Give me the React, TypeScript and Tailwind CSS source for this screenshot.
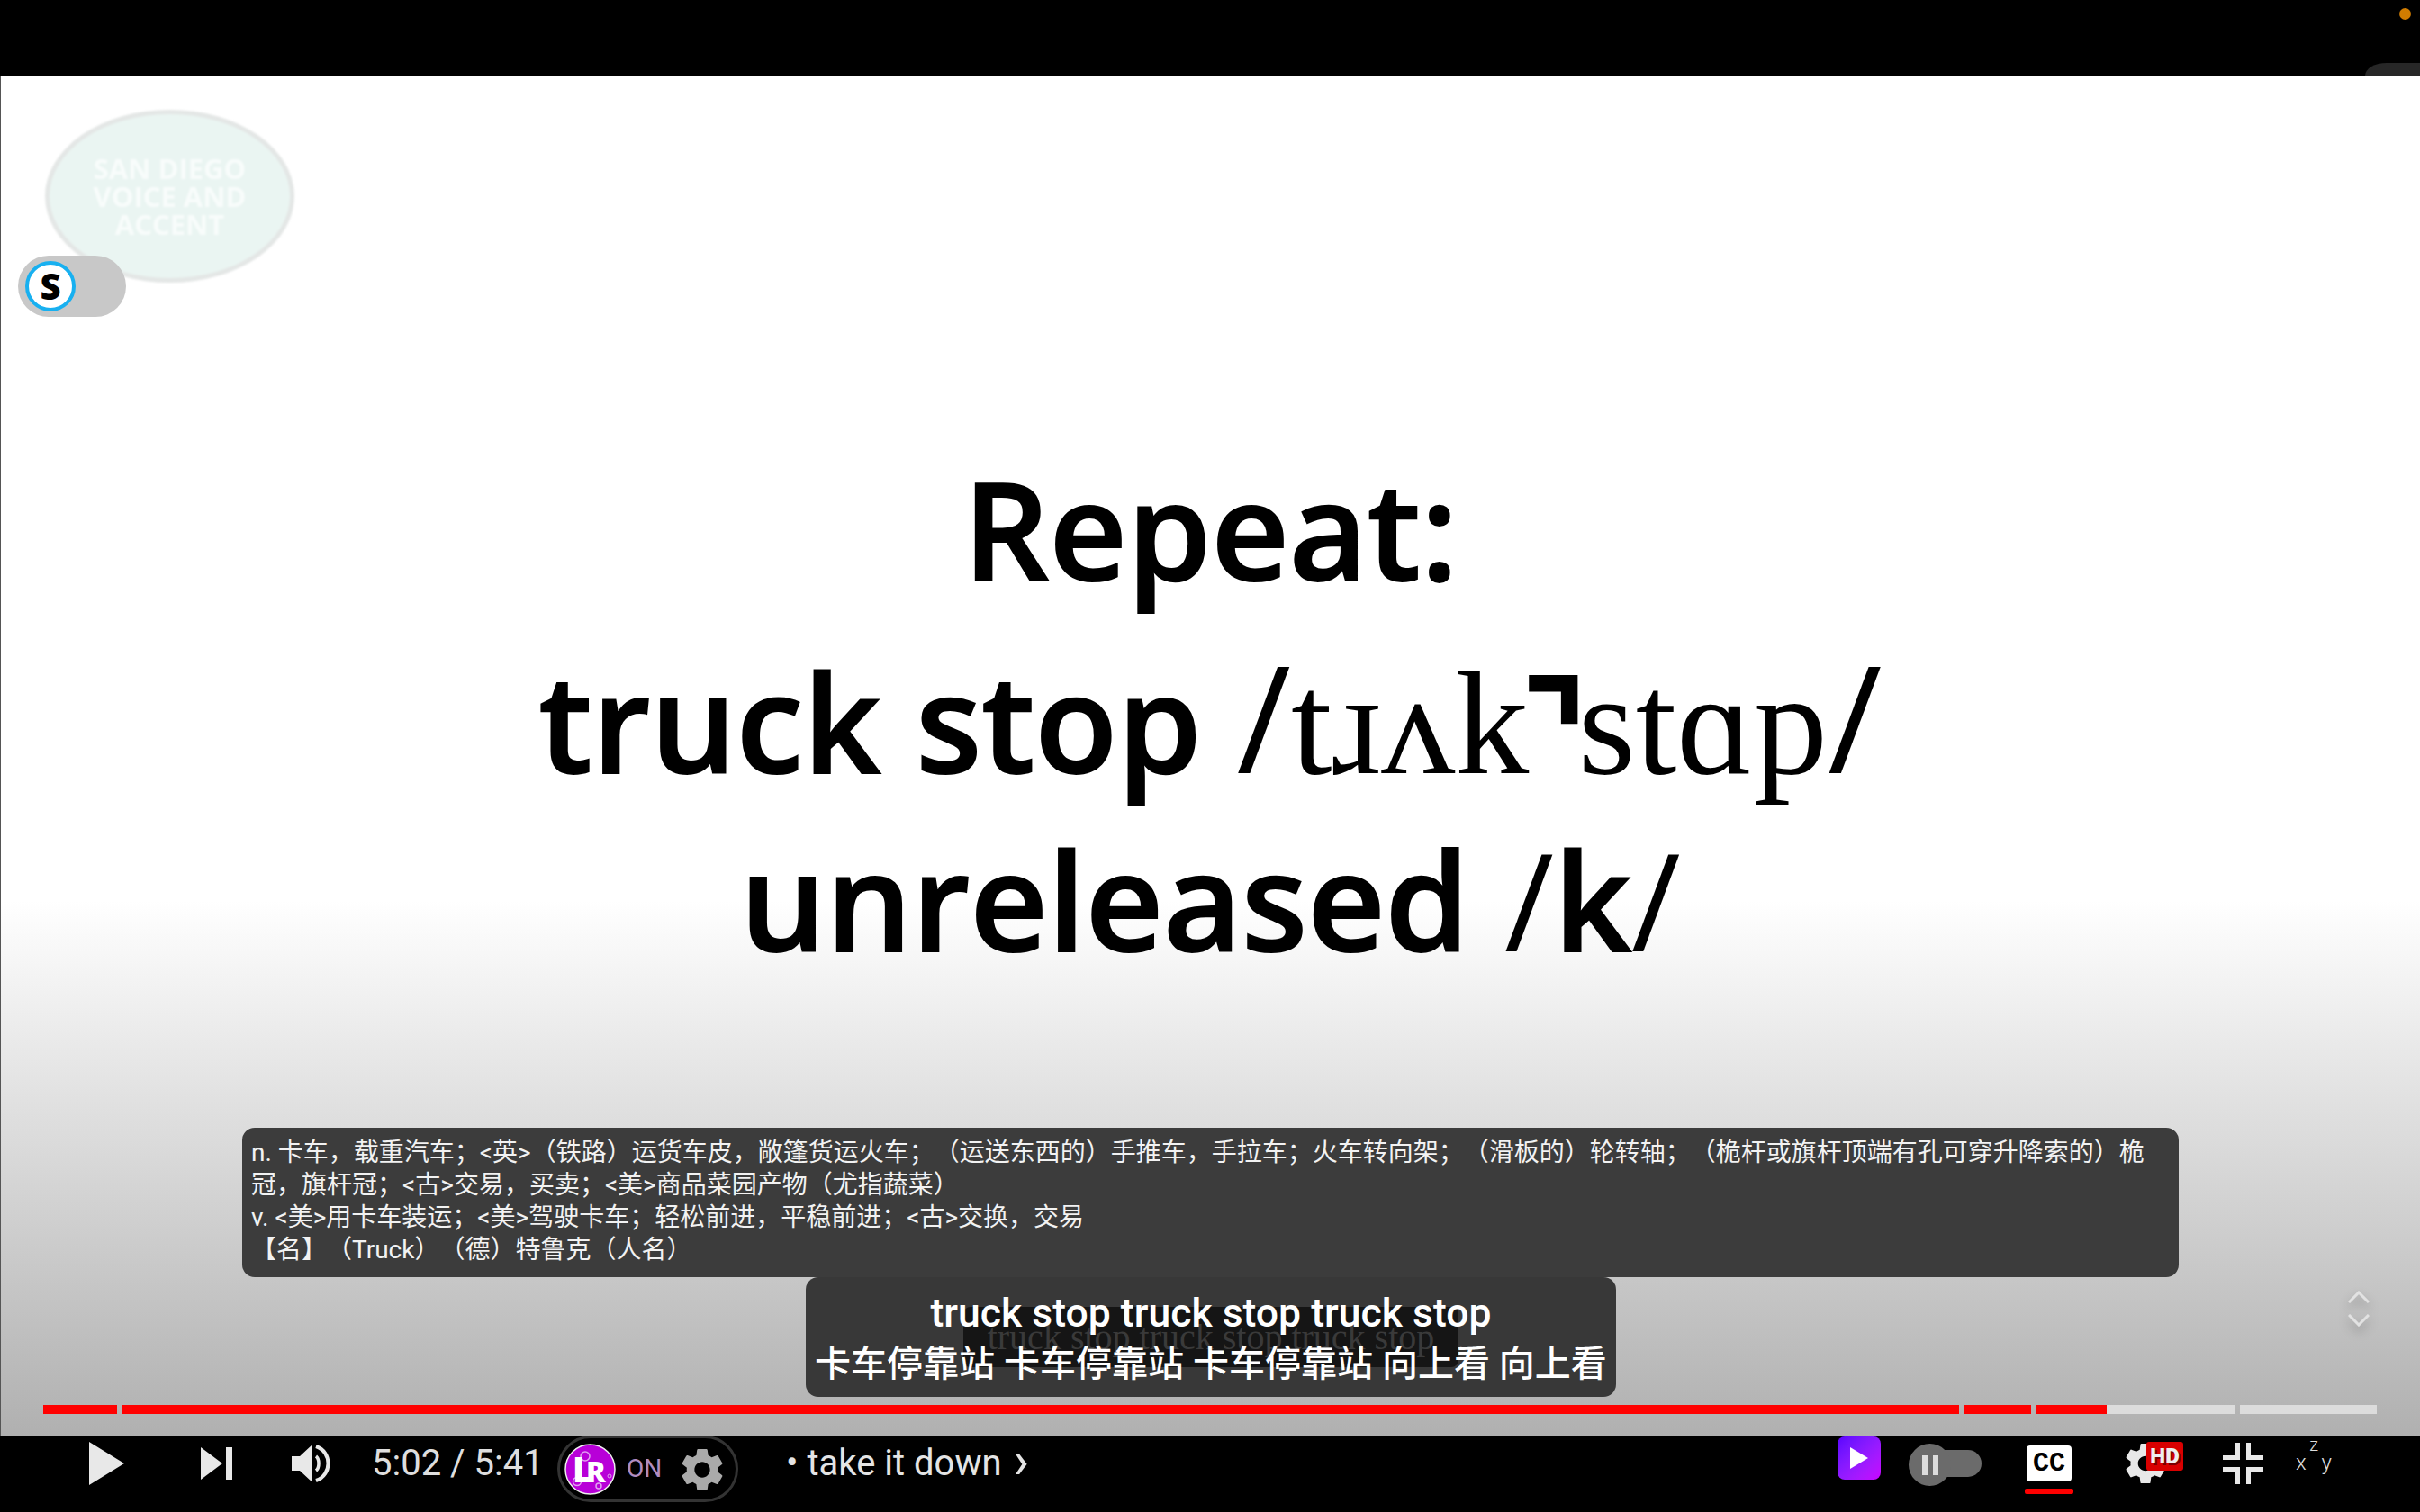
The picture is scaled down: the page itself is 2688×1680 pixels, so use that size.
const sans = "font-['Roboto','Noto_Sans_CJK_SC',sans-serif]";

const dictionary = [
  "n. 卡车，载重汽车；<英>（铁路）运货车皮，敞篷货运火车；（运送东西的）手推车，手拉车；火车转向架；（滑板的）轮转轴；（桅杆或旗杆顶端有孔可穿升降索的）桅",
  "冠，旗杆冠；<古>交易，买卖；<美>商品菜园产物（尤指蔬菜）",
  "v. <美>用卡车装运；<美>驾驶卡车；轻松前进，平稳前进；<古>交换，交易",
  "【名】（Truck）（德）特鲁克（人名）",
];

const GEAR =
  "M19.14 12.94c.04-.3.06-.61.06-.94 0-.32-.02-.64-.07-.94l2.03-1.58c.18-.14.23-.41.12-.61l-1.92-3.32c-.12-.22-.37-.29-.59-.22l-2.39.96c-.5-.38-1.03-.7-1.62-.94l-.36-2.54c-.04-.24-.24-.41-.48-.41h-3.84c-.24 0-.43.17-.47.41l-.36 2.54c-.59.24-1.13.57-1.62.94l-2.39-.96c-.22-.08-.47 0-.59.22L2.74 8.87c-.12.21-.08.47.12.61l2.03 1.58c-.05.3-.09.63-.09.94s.02.64.07.94l-2.03 1.58c-.18.14-.23.41-.12.61l1.92 3.32c.12.22.37.29.59.22l2.39-.96c.5.38 1.03.7 1.62.94l.36 2.54c.05.24.24.41.48.41h3.84c.24 0 .44-.17.47-.41l.36-2.54c.59-.24 1.13-.56 1.62-.94l2.39.96c.22.08.47 0 .59-.22l1.92-3.32c.12-.22.07-.47-.12-.61l-2.01-1.58zM12 15.6c-1.98 0-3.6-1.62-3.6-3.6s1.62-3.6 3.6-3.6 3.6 1.62 3.6 3.6-1.62 3.6-3.6 3.6z";

function Gear({ className }: { className: string }) {
  return (
    <svg viewBox="2.5 2 19 20" className={className} fill="currentColor">
      <path d={GEAR} fillRule="evenodd" />
    </svg>
  );
}

function Progress() {
  return (
    <div className="flex h-[10px] gap-[6px] pl-[47px] pr-[48px]">
      <div className="w-[82px] bg-[#ff0000]" />
      <div className="w-[2040px] bg-[#ff0000]" />
      <div className="w-[74px] bg-[#ff0000]" />
      <div className="flex w-[220px]">
        <div className="w-[78px] bg-[#ff0000]" />
        <div className="flex-1 bg-[#dcdcdc]" />
      </div>
      <div className="flex-1 bg-[#dcdcdc]" />
    </div>
  );
}

function Slide() {
  return (
    <div className="flex flex-1 flex-col items-center pt-[417px] font-['Open_Sans',sans-serif] text-[150px] font-semibold leading-[172px] text-black [-webkit-text-stroke:2px_#000000]">
      <div>Repeat:</div>
      <div className="mt-[36px] h-[172px] whitespace-nowrap">
        truck stop{" "}
        <span className="text-[165px] font-normal [-webkit-text-stroke:0]">/</span>
        <span className="font-['Liberation_Serif',serif] text-[164px] font-normal [-webkit-text-stroke:0]">
          tɹʌk
          <span className="inline-block translate-y-[55px] scale-[2.1] font-['DejaVu_Serif',serif]">˺</span>
          stɑp
        </span>
        <span className="text-[165px] font-normal [-webkit-text-stroke:0]">/</span>
      </div>
      <div className="mt-[32px] whitespace-nowrap">
        unreleased <span className="font-normal [-webkit-text-stroke:0]">/</span>k
        <span className="font-normal [-webkit-text-stroke:0]">/</span>
      </div>
    </div>
  );
}

function Video() {
  return (
    <div className="relative flex flex-1 flex-col border-l border-[#555555] bg-linear-to-b from-white from-[60.6%] to-[#b0b0b0] pb-[25px]">
      <Slide />
      <Progress />

      <div className="absolute left-[49px] top-[38px] flex h-[192px] w-[277px] flex-col items-center justify-center rounded-[50%] border-[5px] border-[#e4e7e6] bg-[#eaf5f2] font-['Open_Sans',sans-serif] text-[31px] font-bold leading-[31px] text-[#f8fcfb] blur-[1px]">
        <div>SAN DIEGO</div>
        <div>VOICE AND</div>
        <div>ACCENT</div>
      </div>

      <div className="absolute left-[19px] top-[200px] flex h-[68px] w-[120px] items-center rounded-full bg-[#c8c8c8] pl-[8px]">
        <div className="flex size-[56px] items-center justify-center rounded-full border-[4px] border-[#18b0f0] bg-white font-['Open_Sans',sans-serif] text-[40px] font-extrabold text-black">
          S
        </div>
      </div>

      <div className={`absolute left-[268px] top-[1169px] h-[166px] w-[2151px] rounded-[14px] bg-[#3c3c3c] pl-[10px] pt-[10px] text-[28px] leading-[36px] text-[#f2f2f2] [text-spacing-trim:space-all] ${sans}`}>
        {dictionary.map((line) => (
          <div key={line} className="whitespace-nowrap">
            {line}
          </div>
        ))}
      </div>

      <div className={`absolute left-[894px] top-[1335px] h-[133px] w-[900px] rounded-[14px] bg-[#383838] text-center font-medium text-white ${sans}`}>
        <div className="absolute left-[175px] top-[33px] flex h-[67px] w-[550px] items-center justify-center rounded-[8px] bg-[#151515] font-['Liberation_Serif',serif] text-[40px] font-normal text-[#3a3a3a]">
          truck stop truck stop truck stop
        </div>
        <div className="relative whitespace-nowrap pt-[12px] text-[44.5px] leading-[56px]">truck stop truck stop truck stop</div>
        <div className="relative whitespace-nowrap pt-[1px] text-[40px] leading-[56px]">卡车停靠站 卡车停靠站 卡车停靠站 向上看 向上看</div>
      </div>

      <div className="absolute left-[2607px] top-[1350px] flex flex-col gap-[12px] drop-shadow-[0_6px_6px_rgba(0,0,0,0.3)]">
        <svg viewBox="0 0 24 14" className="h-[14px] w-[24px]" fill="none" stroke="#e2e2e2" strokeWidth="3">
          <path d="M1 13 L12 2 L23 13" />
        </svg>
        <svg viewBox="0 0 24 14" className="h-[14px] w-[24px]" fill="none" stroke="#e2e2e2" strokeWidth="3">
          <path d="M1 1 L12 12 L23 1" />
        </svg>
      </div>
    </div>
  );
}

function Controls() {
  return (
    <div className={`flex h-[84px] items-start bg-black text-[#dedede] ${sans}`}>
      <svg viewBox="0 0 39 48" className="ml-[99px] mt-[6px] h-[48px] w-[39px]" fill="#e8e8e8">
        <path d="M0 0 L39 24 L0 48 Z" />
      </svg>

      <svg viewBox="0 0 35 36" className="ml-[85px] mt-[12px] h-[36px] w-[35px]" fill="#e8e8e8">
        <path d="M0 0 L24 18 L0 36 Z M28 0 H35 V36 H28 Z" />
      </svg>

      <svg viewBox="0 0 43 42" className="ml-[66px] mt-[9px] h-[42px] w-[43px]" fill="none">
        <path d="M0 13 H9 L23 0 V42 L9 29 H0 Z" fill="#e8e8e8" />
        <path d="M27 13 C31 16 31 26 27 29" stroke="#e8e8e8" strokeWidth="3.5" />
        <path d="M27 2 C45 8 45 34 27 40" stroke="#e8e8e8" strokeWidth="4" />
      </svg>

      <div className="ml-[46px] w-[189px] whitespace-nowrap text-[40px] leading-[60px]">5:02 / 5:41</div>

      <div className="ml-[17px] mt-[-1px] flex h-[74px] w-[201px] items-center rounded-[37px] border-[3px] border-[#333333] pl-[5px]">
        <svg viewBox="0 0 57 57" className="h-[57px] w-[57px]">
          <circle cx="28.5" cy="28.5" r="27.5" fill="#b800d8" stroke="#eeeeee" strokeWidth="1.5" />
          <circle cx="23" cy="14" r="5" fill="none" stroke="#e0a0f0" strokeWidth="1.5" />
          <circle cx="14" cy="42" r="4.5" fill="none" stroke="#e0a0f0" strokeWidth="1.5" />
          <circle cx="38" cy="47" r="3" fill="none" stroke="#e0a0f0" strokeWidth="1.5" />
          <circle cx="50" cy="36" r="2" fill="none" stroke="#e0a0f0" strokeWidth="1" />
          <text x="9" y="43" fontFamily="Open Sans" fontWeight="800" fontSize="38" fill="#ffffff">L</text>
          <text x="24" y="43" fontFamily="Open Sans" fontWeight="800" fontSize="32" fill="#ffffff">R</text>
        </svg>
        <div className="ml-[12px] text-[28px] text-[#b08cc0]">ON</div>
        <Gear className="ml-[22px] mt-[2px] h-[48px] w-[46px] text-[#aaaaaa]" />
      </div>

      <div className="ml-[53px] whitespace-nowrap text-[40px] leading-[60px] text-[#e4e4e4]">
        • take it down <span className="relative top-[3px] ml-[3px] text-[58px] leading-[40px]">›</span>
      </div>

      <div className="ml-auto flex items-start pr-[98px]">
        <div className="flex h-[48px] w-[48px] items-center justify-center rounded-[8px] bg-linear-to-br from-[#5a00ff] to-[#c800ff]">
          <svg viewBox="0 0 20 24" className="h-[24px] w-[20px]" fill="#ffffff">
            <path d="M0 0 L20 12 L0 24 Z" />
          </svg>
        </div>

        <div className="relative ml-[31px] mt-[8px] h-[47px] w-[81px]">
          <div className="absolute left-[40px] top-[7px] h-[30px] w-[41px] rounded-r-full bg-[#6b6b6b]" />
          <div className="absolute left-0 top-0 flex size-[47px] items-center justify-center gap-[6px] rounded-full bg-[#6b6b6b]">
            <div className="h-[22px] w-[6px] bg-[#dcdcdc]" />
            <div className="h-[22px] w-[6px] bg-[#dcdcdc]" />
          </div>
        </div>

        <div className="ml-[48px] mt-[10px] flex w-[54px] flex-col items-center">
          <div className="flex h-[40px] w-[50px] items-center justify-center rounded-[4px] bg-white font-['Liberation_Mono',monospace] text-[30px] font-bold leading-none text-black">
            CC
          </div>
          <div className="mt-[8px] h-[6px] w-[54px] rounded-[2px] bg-[#ff0000]" />
        </div>

        <div className="relative ml-[57px] mt-[7px] h-[46px] w-[65px]">
          <Gear className="absolute left-0 top-0 h-[46px] w-[46px] text-[#e8e8e8]" />
          <div className="absolute left-[24px] top-[-1px] flex h-[32px] w-[41px] items-center justify-center rounded-[3px] bg-[#d90000] text-[24px] font-black leading-none text-[#eeeeee] [text-shadow:2px_2px_0_#7a0000]">
            HD
          </div>
        </div>

        <svg viewBox="0 0 45 46" className="ml-[44px] mt-[7px] h-[46px] w-[45px]" fill="#e8e8e8">
          <path d="M14 0 H19 V19 H0 V14 H14 Z M26 0 H31 V14 H45 V19 H26 Z M0 27 H19 V46 H14 V32 H0 Z M26 27 H45 V32 H31 V46 H26 Z" />
        </svg>

        <div className="ml-[36px] mt-[1px] flex w-[40px] flex-col items-center text-[24px] font-light leading-[24px] text-[#dddddd]">
          <div className="text-[20px] leading-[16px]">z</div>
          <div className="flex w-full justify-between">
            <span>x</span>
            <span>y</span>
          </div>
        </div>
      </div>
    </div>
  );
}

export default function App() {
  return (
    <div className="flex h-[1680px] w-[2688px] flex-col overflow-hidden bg-black">
      <div className="relative h-[84px] shrink-0 bg-black">
        <div className="absolute left-[2665px] top-[9px] size-[13px] rounded-full bg-[#d07c00]" />
        <div className="absolute bottom-0 left-[2627px] h-[14px] w-[61px] rounded-tl-[24px_14px] bg-[#272727]" />
      </div>
      <Video />
      <Controls />
    </div>
  );
}
